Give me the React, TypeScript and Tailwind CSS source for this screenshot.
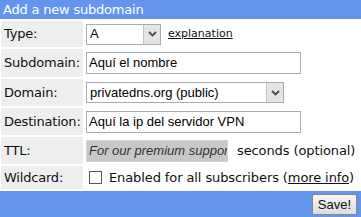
import { ReactNode } from 'react';

const verdana = { fontFamily: '"DejaVu Sans", Verdana, sans-serif' };
const arial = { fontFamily: '"Liberation Sans", Arial, sans-serif' };

function Arrow() {
  return (
    <span className="flex h-full w-[17px] items-center justify-center border-l border-[#c3c3c3] bg-[#e4e4e4]">
      <svg width="9" height="6" viewBox="0 0 9 6">
        <path d="M1 1 L4.5 4.5 L8 1" fill="none" stroke="#4d4d4d" strokeWidth="1.8" />
      </svg>
    </span>
  );
}

function Row({ label, children }: { label: string; children: ReactNode }) {
  return (
    <>
      <div className="flex items-center bg-[#eeeeee] pl-[3px] text-[13px] tracking-[-0.2px] text-[#111]">{label}</div>
      <div className="flex items-center">{children}</div>
    </>
  );
}

export default function App() {
  return (
    <div className="w-[361px] h-[217px] bg-white overflow-hidden" style={verdana}>
      <div className="h-[19px] bg-[#6495ed] pl-[3px] text-[13px] leading-[19px] tracking-[-0.2px] text-white">Add a new subdomain</div>
      <div className="grid grid-cols-[82px_1fr] grid-rows-[26px_28px_27px_27px_27px_23px] gap-x-[3px] gap-y-[2px] px-[1px] pt-[2px]">
        <Row label="Type:">
          <div className="flex h-[21px] w-[75px] items-center border border-[#a5acb2] bg-white" style={arial}>
            <span className="flex-1 pl-[3px] text-[13px]">A</span>
            <Arrow />
          </div>
          <a className="ml-[7px] text-[11px] text-[#111] underline">explanation</a>
        </Row>
        <Row label="Subdomain:">
          <div className="flex h-[22px] w-[215px] items-center border border-[#a5acb2] pl-[2px] text-[13px]" style={arial}>
            Aquí el nombre
          </div>
        </Row>
        <Row label="Domain:">
          <div className="flex h-[21px] w-[198px] items-center border border-[#a5acb2] bg-white" style={arial}>
            <span className="flex-1 pl-[3px] text-[13px]">privatedns.org (public)</span>
            <Arrow />
          </div>
        </Row>
        <Row label="Destination:">
          <div className="flex h-[22px] w-[215px] items-center border border-[#a5acb2] pl-[2px] text-[13px]" style={arial}>
            Aquí la ip del servidor VPN
          </div>
        </Row>
        <Row label="TTL:">
          <div className="flex h-[22px] w-[142px] shrink-0 items-center overflow-hidden whitespace-nowrap border border-[#d4d4d4] bg-[#c8c8c8] pl-[2px] text-[13px] italic text-[#333]" style={arial}>
            For our premium suppor
          </div>
          <span className="ml-[9px] whitespace-nowrap text-[13px] tracking-[-0.1px] text-[#111]">seconds (optional)</span>
        </Row>
        <Row label="Wildcard:">
          <span className="ml-[3px] h-[13px] w-[13px] border border-[#555] bg-white" />
          <span className="ml-[7px] whitespace-nowrap text-[13px] tracking-[-0.1px] text-[#111]">
            Enabled for all subscribers (<a className="underline">more info</a>)
          </span>
        </Row>
      </div>
      <div className="mt-[2px] flex h-[26px] items-center justify-end bg-[#6495ed] pr-[4px]">
        <button className="h-[21px] rounded-[2px] border border-[#888] bg-gradient-to-b from-[#f6f6f6] to-[#dcdcdc] px-[5px] text-[13px] text-[#111]" style={arial}>
          Save!
        </button>
      </div>
    </div>
  );
}
